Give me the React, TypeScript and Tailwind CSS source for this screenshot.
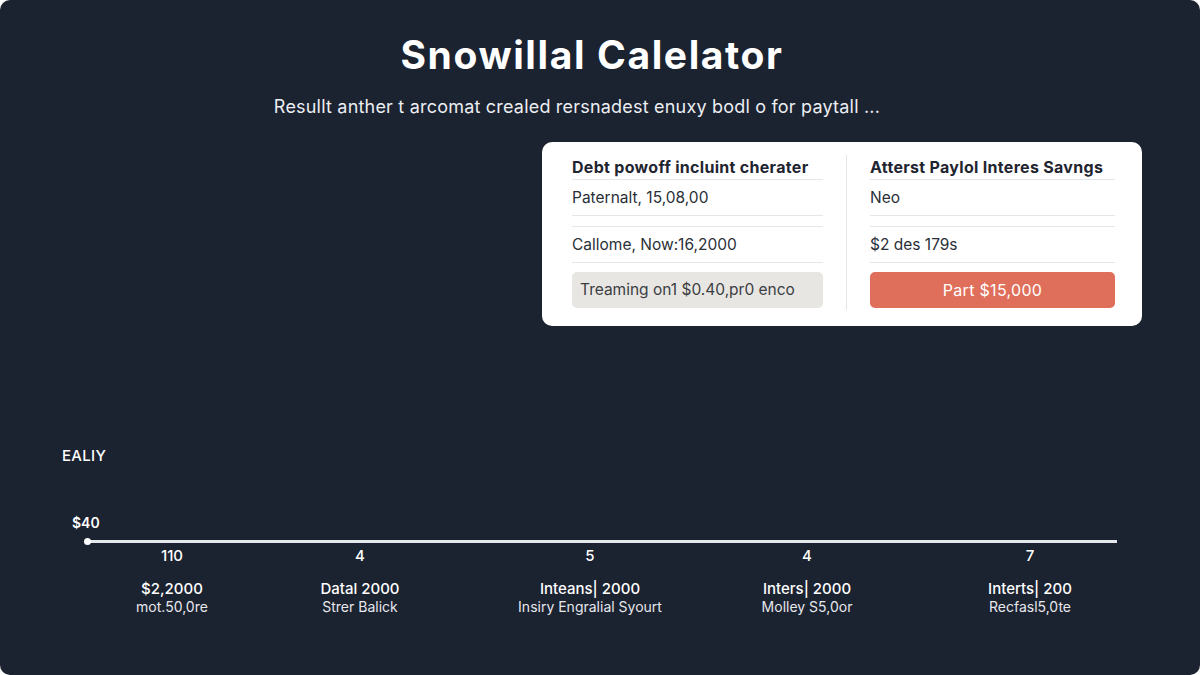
import React from 'react';

const ticks = [
  { n: '110', a: '$2,2000', b: 'mot.50,0re', w: 'w-[196px]' },
  { n: '4', a: 'Datal 2000', b: 'Strer Balick', w: 'w-[180px]' },
  { n: '5', a: 'Inteans| 2000', b: 'Insiry Engralial Syourt', w: 'w-[280px]' },
  { n: '4', a: 'Inters| 2000', b: 'Molley S5,0or', w: 'w-[154px]' },
  { n: '7', a: 'Interts| 200', b: 'Recfasl5,0te', w: 'w-[292px]' },
];

const App: React.FC = () => {
  return (
    <div className="w-[1200px] h-[675px] bg-white font-['Inter','Noto_Sans',sans-serif]">
      <div className="w-full h-full bg-[#1b2230] rounded-[10px] overflow-hidden flex flex-col">
        <h1 className="pt-[31px] pr-[16px] text-center text-[39px] leading-[48px] font-bold text-white tracking-[1.6px]">
          Snowillal Calelator
        </h1>
        <p className="mt-[16px] pr-[46px] text-center text-[18px] leading-6 tracking-[0.2px] text-[#eceef2]">
          Resullt anther t arcomat crealed rersnadest enuxy bodl o for paytall ...
        </p>

        <div className="mt-[23px] ml-[542px] w-[600px] h-[184px] bg-white rounded-[10px] pl-[30px] pr-[27px] pt-[13px] pb-[16px] flex">
          {/* left column */}
          <div className="w-[251px] flex flex-col">
            <div className="h-[25px] border-b border-[#e4e6ea] text-[16px] font-bold text-[#1f2530] leading-[24px] tracking-[0.3px] whitespace-nowrap">
              Debt powoff incluint cherater
            </div>
            <div className="h-[36px] border-b border-[#e4e6ea] flex items-center text-[15.5px] text-[#2a2f38]">
              Paternalt, 15,08,00
            </div>
            <div className="mt-[10px] h-[37px] border-t border-b border-[#e4e6ea] flex items-center text-[15.5px] text-[#2a2f38]">
              Callome, Now:16,2000
            </div>
            <div className="mt-[9px] h-[36px] rounded-[5px] bg-[#e8e6e3] flex items-center pl-[8px] text-[15.5px] text-[#3a3d42]">
              Treaming on1 $0.40,pr0 enco
            </div>
          </div>

          <div className="mx-[23px] w-px bg-[#e2e4e8]" />

          {/* right column */}
          <div className="flex-1 flex flex-col">
            <div className="h-[25px] border-b border-[#e4e6ea] text-[16px] font-bold text-[#1f2530] leading-[24px] tracking-[0.3px] whitespace-nowrap">
              Atterst Paylol Interes Savngs
            </div>
            <div className="h-[36px] border-b border-[#e4e6ea] flex items-center text-[15.5px] text-[#2a2f38]">
              Neo
            </div>
            <div className="mt-[10px] h-[37px] border-t border-b border-[#e4e6ea] flex items-center text-[15.5px] text-[#2a2f38]">
              $2 des 179s
            </div>
            <div className="mt-[9px] h-[36px] rounded-[5px] bg-[#df6f5b] flex items-center justify-center text-[16px] tracking-[0.3px] text-white">
              Part $15,000
            </div>
          </div>
        </div>

        <div className="mt-[120px] ml-[62px] text-[15px] leading-5 font-medium tracking-[0.3px] text-white">EALIY</div>
        <div className="mt-[47px] ml-[72px] text-[14px] leading-5 font-semibold text-white">$40</div>

        <div className="mt-[7px] ml-[87px] w-[1030px] h-[3px] bg-[#e6e8ec] relative">
          <span className="absolute left-[-3px] top-[-2px] w-[7px] h-[7px] rounded-full bg-white" />
        </div>

        <div className="mt-[3px] ml-[74px] flex">
          {ticks.map((t, i) => (
            <div key={i} className={`${t.w} flex flex-col items-center text-white`}>
              <div className="text-[15px] leading-5 font-medium">{t.n}</div>
              <div className="mt-[14px] text-[15px] leading-[18px] font-medium">{t.a}</div>
              <div className="text-[14px] leading-[17px] text-[#e6e8ec]">{t.b}</div>
            </div>
          ))}
        </div>
      </div>
    </div>
  );
};

export default App;
